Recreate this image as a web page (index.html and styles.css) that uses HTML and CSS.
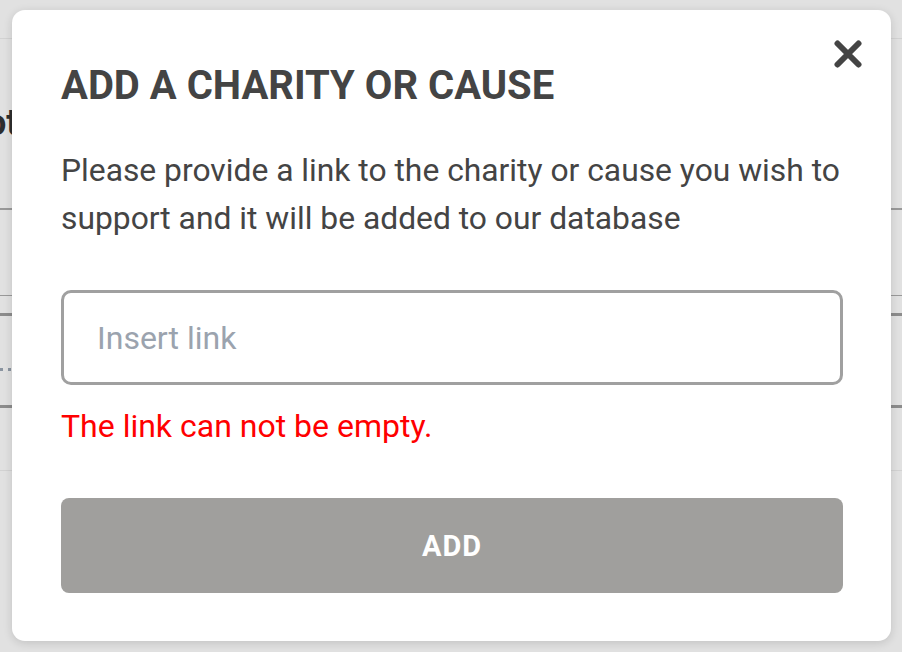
FILE: index.html
```html
<!DOCTYPE html>
<html lang="en">
<head>
<meta charset="utf-8">
<title>Add a charity or cause</title>
<link rel="stylesheet" href="styles.css">
</head>
<body>
<div class="page">
  <div class="page-top"></div>
  <div class="page-heading">ot</div>
  <div class="rule rule-a"></div>
  <div class="rule rule-b"></div>
  <div class="rule rule-c"></div>
  <div class="dots"></div>
  <div class="rule rule-d"></div>
  <div class="rule rule-e"></div>
</div>
<div class="overlay">
  <div class="modal" role="dialog" aria-labelledby="modal-title">
    <button class="close" aria-label="Close">
      <svg width="28" height="28" viewBox="0 0 28 28"><path d="M3.5 3.5 L24.5 24.5 M24.5 3.5 L3.5 24.5" stroke="#444" stroke-width="6" stroke-linecap="round" fill="none"/></svg>
    </button>
    <h2 class="title" id="modal-title">ADD A CHARITY OR CAUSE</h2>
    <p class="desc">Please provide a link to the charity or cause you wish to support and it will be added to our database</p>
    <input class="link-input" type="text" placeholder="Insert link">
    <p class="error">The link can not be empty.</p>
    <button class="add-btn">ADD</button>
  </div>
</div>
</body>
</html>
```

FILE: styles.css
```css
* { box-sizing: border-box; }
html, body { margin: 0; padding: 0; }
body {
  width: 902px;
  height: 652px;
  overflow: hidden;
  background: #e1e1e1;
  font-family: Roboto, "Liberation Sans", sans-serif;
  position: relative;
}
.page {
  display: flex;
  flex-direction: column;
}
.page-top { height: 39px; border-bottom: 1px solid #d2d2d2; }
.page-heading {
  margin-top: 64px;
  margin-left: -14px;
  font-size: 36px;
  font-weight: 700;
  color: #2e2e2e;
  line-height: 40px;
  height: 40px;
}
.rule { width: 100%; }
.rule-a { margin-top: 65px; height: 2px; background: #999; }
.rule-b { margin-top: 85px; height: 1px; background: #999; }
.rule-c { margin-top: 17px; height: 3px; background: #8c8c8c; }
.dots {
  margin-top: 52px;
  width: 14px;
  height: 3px;
  background: repeating-linear-gradient(90deg, #8a94a0 0 3px, transparent 3px 8px);
}
.rule-d { margin-top: 34px; height: 3px; background: #8c8c8c; }
.rule-e { margin-top: 62px; height: 1px; background: #d2d2d2; }

.overlay {
  position: absolute;
  inset: 0;
}
.modal {
  position: absolute;
  left: 12px;
  top: 10px;
  width: 879px;
  height: 631px;
  background: #fff;
  border-radius: 13px;
  box-shadow: 0 2px 10px rgba(0, 0, 0, 0.14);
  padding: 52px 48px 48px 49px;
  display: flex;
  flex-direction: column;
}
.close {
  position: absolute;
  top: 30px;
  right: 29px;
  width: 28px;
  height: 28px;
  padding: 0;
  border: 0;
  background: none;
  display: flex;
}
.title {
  margin: 0;
  font-size: 40px;
  line-height: 48px;
  font-weight: 700;
  color: #444;
}
.desc {
  margin: 36px 0 0;
  font-size: 31.8px;
  line-height: 48px;
  color: #444;
}
.link-input {
  margin-top: 48px;
  height: 95px;
  width: 100%;
  border: 3px solid #a0a0a0;
  border-radius: 10px;
  padding: 0 33px;
  font-family: inherit;
  font-size: 32px;
  color: #444;
  outline: none;
}
.link-input::placeholder { color: #9ba3ae; }
.error {
  margin: 23px 0 0;
  font-size: 32px;
  line-height: 36px;
  color: #ff0000;
}
.add-btn {
  margin-top: 54px;
  height: 95px;
  width: 100%;
  border: 0;
  border-radius: 8px;
  background: #a09f9d;
  color: #fff;
  font-family: inherit;
  font-size: 29px;
  font-weight: 700;
  letter-spacing: 1px;
}
```
